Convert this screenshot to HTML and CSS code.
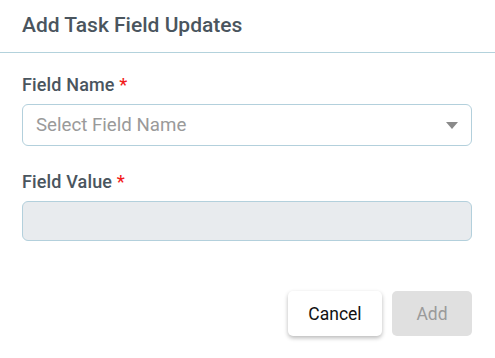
FILE: index.html
```html
<!DOCTYPE html>
<html>
<head>
<meta charset="utf-8">
<link rel="stylesheet" href="styles.css">
</head>
<body>
<div class="dialog">
  <div class="header">
    <h2 class="title">Add Task Field Updates</h2>
  </div>
  <div class="content">
    <div class="field">
      <label class="label">Field Name <span class="req">*</span></label>
      <div class="select">
        <span class="placeholder">Select Field Name</span>
        <svg class="caret" width="12" height="7" viewBox="0 0 12 7"><path d="M0 0h12L6 7z" fill="#8a8a8a"/></svg>
      </div>
    </div>
    <div class="field">
      <label class="label">Field Value <span class="req">*</span></label>
      <div class="input"></div>
    </div>
  </div>
  <div class="footer">
    <button class="btn btn-cancel">Cancel</button>
    <button class="btn btn-add">Add</button>
  </div>
</div>
</body>
</html>
```
FILE: styles.css
```css
html, body {
  margin: 0;
  padding: 0;
  background: #fff;
  font-family: Roboto, "Liberation Sans", sans-serif;
}
.dialog {
  width: 495px;
  height: 358px;
  display: flex;
  flex-direction: column;
}
.header {
  height: 53px;
  box-sizing: border-box;
  border-bottom: 1px solid #b3d2dc;
  padding: 0 22px 2px;
  display: flex;
  align-items: center;
}
.title {
  margin: 0;
  font-size: 21px;
  font-weight: 500;
  color: #4a555e;
}
.content {
  padding: 21px 23px 0 22px;
  display: flex;
  flex-direction: column;
  gap: 25px;
}
.field {
  display: flex;
  flex-direction: column;
  gap: 8px;
}
.label {
  font-size: 18px;
  font-weight: 500;
  color: #4a555e;
  line-height: 22px;
  letter-spacing: 0.15px;
}
.req {
  color: #f21c1c;
}
.select {
  height: 42px;
  box-sizing: border-box;
  border: 1px solid #b3d0dc;
  border-radius: 6px;
  padding: 0 13px 0 13px;
  display: flex;
  align-items: center;
  justify-content: space-between;
}
.placeholder {
  font-size: 18.7px;
  color: #9a9a9a;
}
.caret {
  display: block;
}
.input {
  height: 40px;
  box-sizing: border-box;
  border: 1px solid #b3d0dc;
  border-radius: 6px;
  background: #e8ebee;
}
.footer {
  margin-top: auto;
  padding: 0 23px 22px 0;
  display: flex;
  justify-content: flex-end;
  gap: 10px;
}
.btn {
  height: 45px;
  border: none;
  border-radius: 5px;
  font-family: Roboto, "Liberation Sans", sans-serif;
  font-size: 17.5px;
}
.btn-cancel {
  width: 94px;
  background: #fff;
  color: #111;
  box-shadow: 0 2px 4px rgba(0,0,0,0.28);
}
.btn-add {
  width: 80px;
  background: #e0e0e0;
  color: #9a9a9a;
}
```
